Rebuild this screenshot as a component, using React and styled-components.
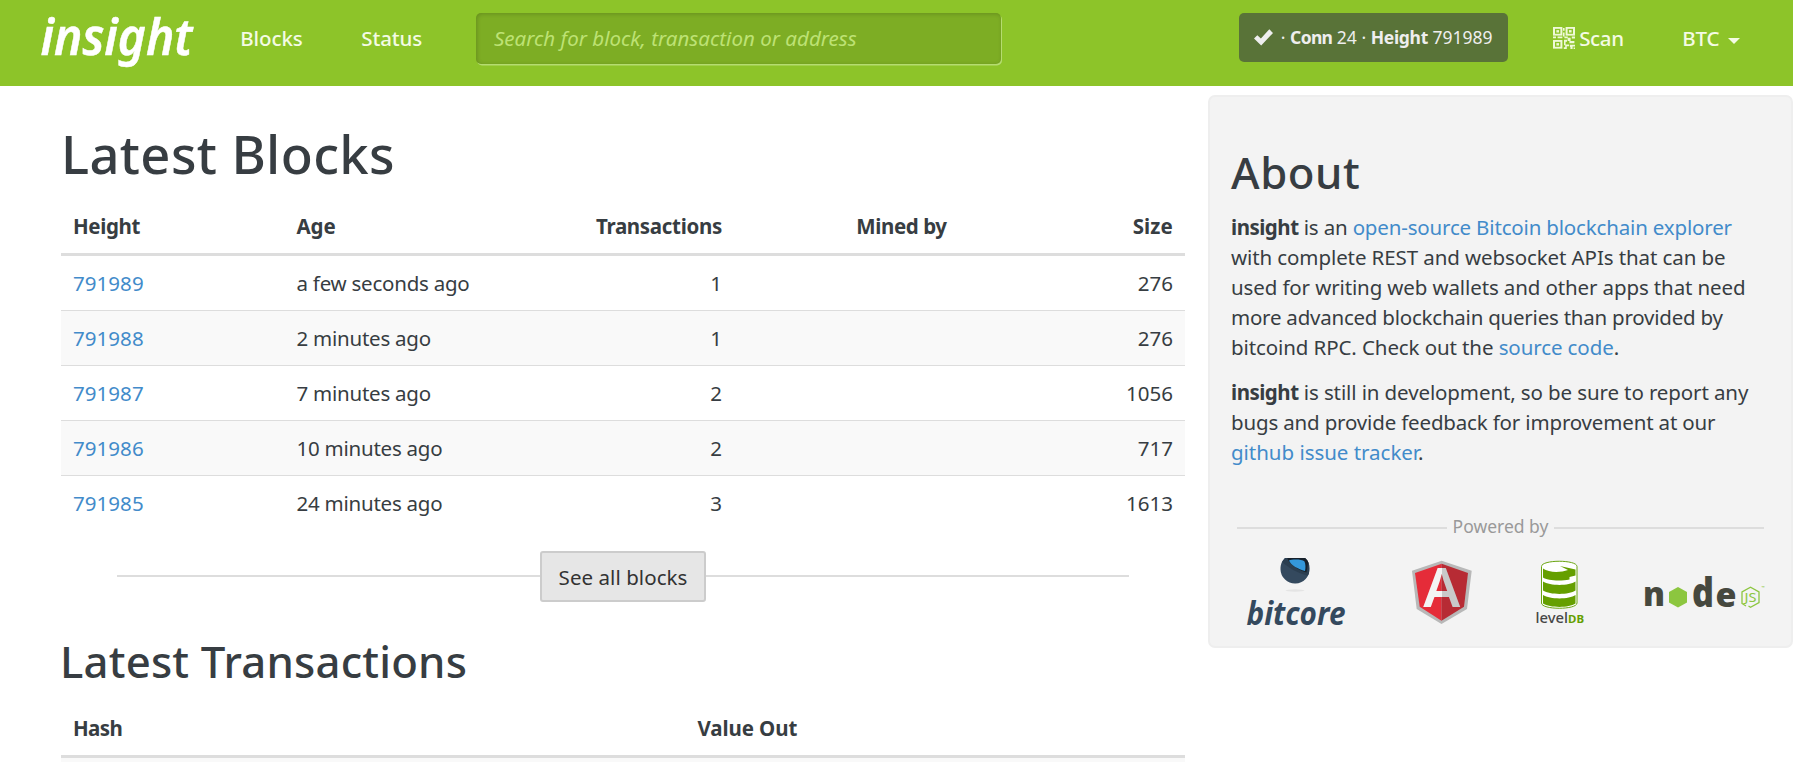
import React from 'react';
import styled, { createGlobalStyle } from 'styled-components';

const GlobalStyle = createGlobalStyle`
  * { box-sizing: border-box; }
  html, body { margin: 0; height: 100%; overflow: hidden; background: #fff; }
  body {
    font-family: "Noto Sans", "Open Sans", sans-serif;
    font-size: 20.5px;
    line-height: 30px;
    color: #373d42;
  }
`;

const Page = styled.div`
  height: 100vh;
  overflow: hidden;
`;

/* ---------- header ---------- */

const Header = styled.header`
  display: flex;
  align-items: flex-start;
  height: 86px;
  padding: 0 24px 0 36px;
  background: #8dc429;
`;

const Brand = styled.a`
  display: block;
  width: 175px;
  height: 76px;
  svg { display: block; overflow: visible; }
`;

const Nav = styled.nav`
  display: flex;
`;

const NavLink = styled.a`
  display: flex;
  align-items: center;
  height: 76px;
  padding: 0 29.3px;
  color: #f4fbe4;
  font-weight: 500;
  white-space: nowrap;
  letter-spacing: ${(p) => p.$track || 0}px;
  svg { margin-right: 4px; }
`;

const SearchInput = styled.input`
  width: 525px;
  height: 51px;
  margin: 13px 0 0 24.5px;
  padding: 0 18px 1px;
  border: 0;
  border-radius: 5px;
  outline: 0;
  background: #7dad24;
  box-shadow: inset 1px 1px 4px rgba(0, 0, 0, 0.18), 1px 1.5px 0 #b5dc70;
  font: italic 400 20.5px/30px "Noto Sans", "Open Sans", sans-serif;
  letter-spacing: 0.03px;
  color: #fff;
  &::placeholder { color: #bde274; opacity: 1; }
`;

const StatusBadge = styled.div`
  display: flex;
  align-items: center;
  width: 269px;
  height: 49px;
  margin: 13px 16px 0 auto;
  padding: 0 0 1px 15px;
  border-radius: 5px;
  background: #597338;
  color: #eee;
  font-size: 17.5px;
  white-space: pre;
`;

const BadgeText = styled.span`
  margin-left: 8px;
`;

const BadgeLabel = styled.strong`
  letter-spacing: ${(p) => p.$track}px;
`;

const Caret = styled.span`
  width: 0;
  height: 0;
  margin: 6px 0 0 8.5px;
  border: 6px solid transparent;
  border-top-color: #f4fbe4;
  border-bottom: 0;
`;

/* ---------- content ---------- */

const Content = styled.div`
  display: flex;
  align-items: flex-start;
  padding-left: 61px;
`;

const Main = styled.main`
  width: 1124px;
  padding-top: 38px;
`;

const PageTitle = styled.h1`
  margin: 0 0 15px;
  font-size: 52.5px;
  line-height: 60px;
  font-weight: 500;
  letter-spacing: 0.4px;
`;

const SectionTitle = styled.h2`
  margin: ${(p) => p.$margin};
  font-size: 43.7px;
  line-height: 50px;
  font-weight: 500;
  letter-spacing: ${(p) => p.$track}px;
`;

const TableRow = styled.div`
  display: grid;
  grid-template-columns: ${(p) => p.$cols};
  border-top: ${(p) => (p.$ruled ? '1px solid #ddd' : '0')};
  background: ${(p) => (p.$striped ? '#f9f9f9' : 'transparent')};
`;

const TableHead = styled(TableRow)`
  border-bottom: 3px solid #ddd;
  font-weight: 700;
`;

const Cell = styled.div`
  padding: 12px;
  height: 54px;
  text-align: ${(p) => p.$align || 'left'};
  letter-spacing: ${(p) => p.$track || 0}px;
  white-space: nowrap;
`;

const Link = styled.a`
  color: #428bca;
`;

const MoreBar = styled.div`
  display: flex;
  align-items: center;
  margin: 21px 56px 34px;
`;

const Rule = styled.span`
  flex: 1;
  height: 2px;
  background: #ddd;
`;

const MoreRule = styled(Rule)`
  margin-bottom: 2px;
`;

const MoreButton = styled.button`
  width: 166px;
  height: 51px;
  padding: 0;
  border: 2px solid #ccc;
  border-radius: 3px;
  background: #e6e6e6;
  color: #333;
  font: 400 20.5px/30px "Noto Sans", "Open Sans", sans-serif;
  letter-spacing: 0.06px;
`;

/* ---------- sidebar ---------- */

const Sidebar = styled.aside`
  width: 585px;
  height: 553px;
  margin: 9px 0 0 23px;
  padding: 50px 20px 0 21px;
  border: 2px solid #eee;
  border-radius: 7px;
  background: #f3f3f3;
`;

const Paragraph = styled.p`
  margin: 0 0 15px;
`;

const Line = styled.span`
  display: block;
  white-space: nowrap;
  letter-spacing: ${(p) => p.$track}px;
`;

const Name = styled.strong`
  letter-spacing: -0.5px;
`;

const PoweredBy = styled.div`
  display: flex;
  align-items: center;
  gap: 6px;
  margin: 46px 7px 16px 6px;
  font-size: 17.5px;
  line-height: 26px;
  color: #999;
`;

const PoweredRule = styled(Rule)`
  margin-top: 3px;
`;

const Logos = styled.div`
  display: flex;
  align-items: flex-start;
  padding-left: 15px;
`;

const LogoLink = styled.a`
  display: block;
  height: 76px;
  margin-right: ${(p) => p.$gap || 0}px;
  svg { display: block; overflow: visible; }
`;

/* ---------- drawings ---------- */

const InsightLogo = () => (
  <svg width="165" height="76" viewBox="0 0 165 76">
    <text x="4.5" y="54.8" fontFamily="Noto Sans" fontStyle="italic" fontWeight="600" fontSize="50.5" fill="#fff" stroke="#fff" strokeWidth="0.5" textLength="152" lengthAdjust="spacingAndGlyphs">insight</text>
  </svg>
);

const CheckIcon = () => (
  <svg width="19" height="17" viewBox="0 0 19 17">
    <path d="M0 9.6 3.3 6.2 6.9 9.6 15.3.3 19 4 7.2 16.6Z" fill="#eee" />
  </svg>
);

const Finder = ({ x, y }) => (
  <g>
    <rect x={x + 1} y={y + 1} width="7.4" height="7.4" fill="none" stroke="#eff9d8" strokeWidth="2" />
    <rect x={x + 3.4} y={y + 3.4} width="2.6" height="2.6" fill="#eff9d8" />
  </g>
);

const QrIcon = () => (
  <svg width="22" height="22" viewBox="0 0 22 24" preserveAspectRatio="none">
    <Finder x={0} y={0} />
    <Finder x={12.6} y={0} />
    <Finder x={0} y={14.2} />
    <path
      fill="#eff9d8"
      d="M0 10.4h3v2H0zM4.6 10.4h4.8v2H4.6zM10 1h1.6v3H10zM10 6h1.6v4.4H10zM11.4 10.4h3.4v2h-3.4zM14.6 11.8h3v3.4h3.8v2.4h-5v-2.4h-1.8zM18.8 10.4H22v2.2h-3.2zM11 14h3v2.2h-1.4v3h3.6v1.8h-2.4V24h-3v-2h1.4v-2H11zM17 19.4h5v1.8h-2.4V24h-2.2v-2.2H17zM20.6 22.4H22V24h-1.4z"
    />
  </svg>
);

const BitcoreLogo = () => (
  <svg width="100" height="72" viewBox="0 0 100 72">
    <defs>
      <clipPath id="ball"><path d="M39 3h20c3.4 3 4.6 6.2 4.6 10.6A14.3 14.3 0 0 1 34.5 14.4C34.5 9 36 6 39 3Z" /></clipPath>
    </defs>
    <g clipPath="url(#ball)">
      <rect x="33" y="2" width="32" height="28" fill="#34495e" />
      <path d="M36 7c7 6 15 11 27 14V2H39Z" fill="#2b3e50" />
      <path d="M41 2c1 6 9 12 19.500 15.500L63 2Z" fill="#17212b" />
      <path d="M43 5.500C46 4 56 4 58.500 6.500c1.200 3 1.200 6 .5 9.500C52 14 45 10.500 43 5.500Z" fill="#3498db" />
    </g>
    <ellipse cx="49" cy="35.500" rx="9.500" ry="1.200" fill="#e4e4e4" />
    <text x="0.500" y="69.500" fontFamily="Noto Sans" fontStyle="italic" fontWeight="700" fontSize="32" fill="#34495e" textLength="99" lengthAdjust="spacingAndGlyphs">bitcore</text>
  </svg>
);

const AngularLogo = () => (
  <svg width="60" height="72" viewBox="0 0 60 72">
    <defs>
      <linearGradient id="shade" gradientUnits="userSpaceOnUse" x1="0" x2="60" y1="0" y2="0">
        <stop offset="0.495" stopColor="#f3f3f3" />
        <stop offset="0.495" stopColor="#c9c9c9" />
      </linearGradient>
    </defs>
    <path d="M29.7 5.700 59.7 15.700 55 54 29.5 69 4.7 54 0 15.700Z" fill="#b8b8b8" />
    <path d="M29.7 8.700 3 18 7.700 51.700 29.5 65.700Z" fill="#e52c39" />
    <path d="M29.7 8.700 56 18 52 51.700 29.5 65.700Z" fill="#b72b34" />
    <text x="11.200" y="52" fontFamily="Noto Sans" fontWeight="600" fontSize="55" fill="url(#shade)" textLength="37" lengthAdjust="spacingAndGlyphs">A</text>
  </svg>
);

const LevelDbLogo = () => (
  <svg width="48" height="72" viewBox="0 0 48 72">
    <path d="M5.500 11.500C5.500 4.500 41 4.500 41 11.500V48C41 55 5.500 55 5.500 48Z" fill="#fff" stroke="#6aa510" strokeWidth="1" />
    <g fill="#659f00">
      <path d="M7 13.500C13 18 25 17.500 32 15L24 11 39.500 14.500V20.500L33.500 22V24.500C24 26.500 11 25.500 7 22.500Z" />
      <path d="M7 26.500C14 31 33 31 39.500 26.500V35.500C33 40 14 40 7 35.500Z" />
      <path d="M7 40C14 44.500 33 44.500 39.500 40V48.500C33 53 14 53 7 48.500Z" />
    </g>
    <text x="-0.500" y="67.600" fontFamily="Noto Sans" fontWeight="500" fontSize="14" fill="#474747" textLength="32.500" lengthAdjust="spacingAndGlyphs">level</text>
    <text x="32" y="67.600" fontFamily="Noto Sans" fontWeight="700" fontSize="11" fill="#659f00" textLength="16" lengthAdjust="spacingAndGlyphs">DB</text>
  </svg>
);

const NodeLogo = () => (
  <svg width="120" height="72" viewBox="0 0 120 72">
    <g fontFamily="Noto Sans" fontWeight="900" fill="#46483e">
      <text x="-2" y="51" fontSize="34" textLength="22" lengthAdjust="spacingAndGlyphs">n</text>
      <text x="47" y="51.5" fontSize="40" textLength="22" lengthAdjust="spacingAndGlyphs">d</text>
      <text x="70.5" y="51.5" fontSize="34" textLength="21" lengthAdjust="spacingAndGlyphs">e</text>
    </g>
    <path d="M33 32 42 37V47.500L33 52.500 24 47.500V37Z" fill="#8cc63f" />
    <path d="M101 51 97 48.500V37L105.500 32.200 114 37V47.500L105.500 52.200 103.500 51" fill="none" stroke="#8cc63f" strokeWidth="1.300" />
    <text x="99.500" y="47" fontFamily="Noto Sans" fontWeight="400" fontSize="12" fill="#8cc63f" textLength="12" lengthAdjust="spacingAndGlyphs">JS</text>
    <text x="116.500" y="34" fontFamily="Noto Sans" fontSize="4" fill="#8cc63f">™</text>
  </svg>
);

/* ---------- data ---------- */

const BLOCK_COLS = '223.5px 226px 223.5px 335px 1fr';
const TX_COLS = '624.5px 1fr';

const blocks = [
  { height: '791989', age: 'a few seconds ago', txs: '1', size: '276' },
  { height: '791988', age: '2 minutes ago', txs: '1', size: '276' },
  { height: '791987', age: '7 minutes ago', txs: '2', size: '1056' },
  { height: '791986', age: '10 minutes ago', txs: '2', size: '717' },
  { height: '791985', age: '24 minutes ago', txs: '3', size: '1613' },
];

export default function App() {
  return (
    <Page>
      <GlobalStyle />
      <Header>
        <Brand><InsightLogo /></Brand>
        <Nav>
          <NavLink $track={-0.1}>Blocks</NavLink>
          <NavLink $track={-0.11}>Status</NavLink>
        </Nav>
        <SearchInput placeholder="Search for block, transaction or address" />
        <StatusBadge>
          <CheckIcon />
          <BadgeText>
            {'· '}<BadgeLabel $track={-0.68}>Conn</BadgeLabel>{' 24 · '}
            <BadgeLabel $track={-0.3}>Height</BadgeLabel>{' 791989'}
          </BadgeText>
        </StatusBadge>
        <Nav>
          <NavLink $track={-0.35}><QrIcon />Scan</NavLink>
          <NavLink $track={-0.2}>BTC<Caret /></NavLink>
        </Nav>
      </Header>

      <Content>
        <Main>
          <PageTitle>Latest Blocks</PageTitle>
          <TableHead $cols={BLOCK_COLS}>
            <Cell $track={-0.36}>Height</Cell>
            <Cell $track={-0.07}>Age</Cell>
            <Cell $align="right" $track={-0.31}>Transactions</Cell>
            <Cell $align="center" $track={-0.4}>Mined by</Cell>
            <Cell $align="right" $track={0.15}>Size</Cell>
          </TableHead>
          {blocks.map((b, i) => (
            <TableRow key={b.height} $cols={BLOCK_COLS} $ruled={i > 0} $striped={i % 2 === 1}>
              <Cell $track={0.05}><Link>{b.height}</Link></Cell>
              <Cell $track={-0.24}>{b.age}</Cell>
              <Cell $align="right">{b.txs}</Cell>
              <Cell />
              <Cell $align="right">{b.size}</Cell>
            </TableRow>
          ))}
          <MoreBar>
            <MoreRule />
            <MoreButton>See all blocks</MoreButton>
            <MoreRule />
          </MoreBar>
          <SectionTitle $margin="0 0 15px -1px" $track={0.2}>Latest Transactions</SectionTitle>
          <TableHead $cols={TX_COLS}>
            <Cell $track={-0.58}>Hash</Cell>
            <Cell $track={-0.1}>Value Out</Cell>
          </TableHead>
          <TableRow $cols={TX_COLS} $striped>
            <Cell />
            <Cell />
          </TableRow>
        </Main>

        <Sidebar>
          <SectionTitle $margin="0 0 15px" $track={0.55}>About</SectionTitle>
          <Paragraph>
            <Line $track={-0.17}><Name>insight</Name> is an <Link>open-source Bitcoin blockchain explorer</Link></Line>
            <Line $track={-0.097}>with complete REST and websocket APIs that can be</Line>
            <Line $track={-0.12}>used for writing web wallets and other apps that need</Line>
            <Line $track={-0.229}>more advanced blockchain queries than provided by</Line>
            <Line $track={-0.1}>bitcoind RPC. Check out the <Link>source code</Link>.</Line>
          </Paragraph>
          <Paragraph>
            <Line $track={-0.11}><Name>insight</Name> is still in development, so be sure to report any</Line>
            <Line $track={-0.165}>bugs and provide feedback for improvement at our</Line>
            <Line $track={-0.028}><Link>github issue tracker</Link>.</Line>
          </Paragraph>
          <PoweredBy><PoweredRule />Powered by<PoweredRule /></PoweredBy>
          <Logos>
            <LogoLink $gap={66}><BitcoreLogo /></LogoLink>
            <LogoLink $gap={64}><AngularLogo /></LogoLink>
            <LogoLink $gap={61}><LevelDbLogo /></LogoLink>
            <LogoLink><NodeLogo /></LogoLink>
          </Logos>
        </Sidebar>
      </Content>
    </Page>
  );
}
